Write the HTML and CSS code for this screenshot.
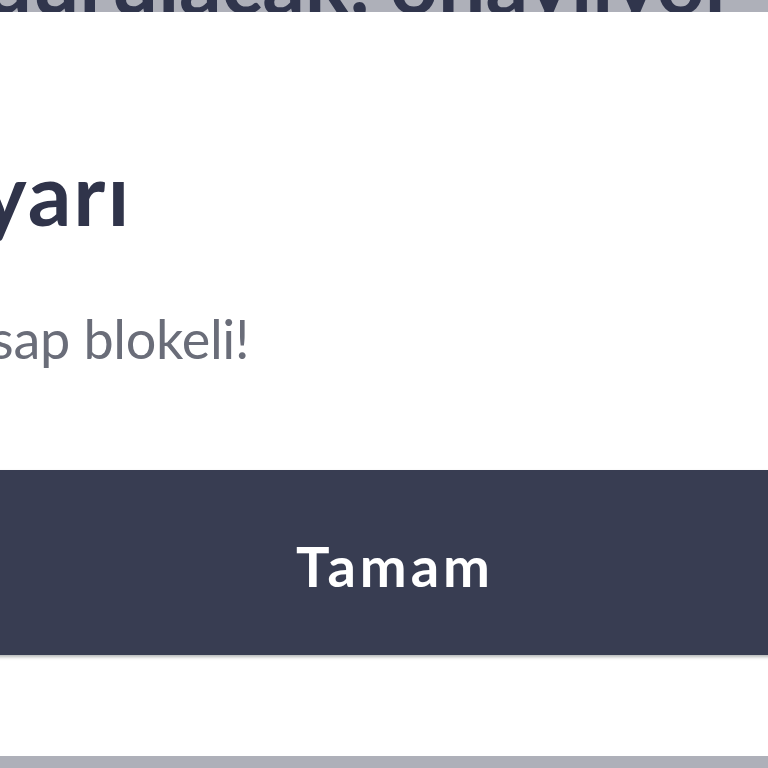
FILE: index.html
```html
<!DOCTYPE html>
<html lang="tr">

<head>
    <meta charset="utf-8">
    <title>Uyarı</title>
    <link rel="stylesheet" href="styles.css">
</head>

<body>

    <!-- page behind the dialog, dimmed -->
    <div class="page">
        <h1 class="page-title">durdurulacak, onaylıyor</h1>
    </div>

    <div class="modal">
        <h2 class="modal-title">Uyarı</h2>
        <p class="modal-text">Hesap blokeli!</p>
        <button class="modal-btn" type="button">Tamam</button>
    </div>

</body>

</html>
```

FILE: styles.css
```css
html, body {
    margin: 0;
    padding: 0;
    height: 100%;
}

body {
    background: #aeb0b9;
    font-family: Lato, "Noto Sans", sans-serif;
    overflow: hidden;
    position: relative;
}

/* heading line ends near the right edge, the rest runs off to the left */
.page {
    width: 736px;
    display: flex;
    justify-content: flex-end;
}

.page-title {
    margin: -60px 0 0;
    white-space: nowrap;
    font-size: 84px;
    font-weight: 700;
    line-height: 1;
    color: #30354c;
}

/* dialog box, wider than the screen on both sides */
.modal {
    position: absolute;
    top: 12px;
    left: -150px;
    width: 1086px;
    height: 744px;
    box-sizing: border-box;
    background: #ffffff;
    padding: 138px 0 101px;
    display: flex;
    flex-direction: column;
}

.modal-title {
    margin: 0;
    padding-left: 66px;
    font-size: 86px;
    font-weight: 700;
    letter-spacing: 2px;
    line-height: 1;
    color: #30344a;
}

.modal-text {
    margin: 76px 0 0;
    padding-left: 72px;
    font-size: 54px;
    font-weight: 400;
    letter-spacing: -0.3px;
    line-height: 1;
    color: #6a6d79;
}

.modal-btn {
    margin-top: auto;
    height: 185px;
    padding: 6px 0 0 4px;
    border: none;
    background: #383d52;
    color: #ffffff;
    font-family: inherit;
    font-size: 56px;
    font-weight: 700;
    letter-spacing: 4px;
    box-shadow: 0 2px 3px rgba(40, 50, 50, 0.35);
    cursor: pointer;
}
```
